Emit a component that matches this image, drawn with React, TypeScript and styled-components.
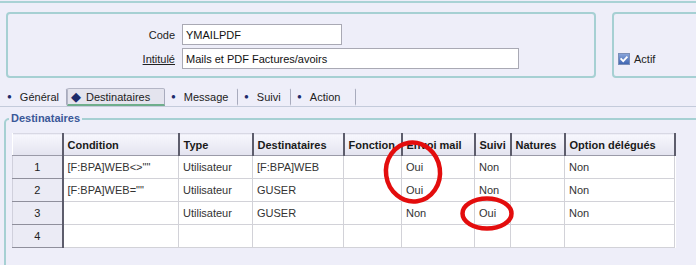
import styled, { createGlobalStyle } from 'styled-components';

const GlobalStyle = createGlobalStyle`
	html, body {
		margin: 0;
		padding: 0;
		background: #eeeef9;
		overflow: hidden;
	}
	body {
		font-family: "Liberation Sans", Arial, sans-serif;
		font-size: 11px;
		color: #222;
	}
`;

const Page = styled.div`
	width: 696px;
	height: 265px;
	overflow: hidden;
	padding-top: 1px;
	box-sizing: border-box;
`;

const TopRule = styled.div`
	height: 0;
	border-top: 2px solid #a9d2d5;
`;

const Header = styled.div`
	display: flex;
	gap: 16px;
	margin-top: 9px;
	padding-left: 6px;
	height: 66px;
`;

const Panel = styled.div<{ $w: number }>`
	flex: 0 0 auto;
	width: ${(p) => p.$w}px;
	box-sizing: border-box;
	border: 2px solid #a6d0d3;
	border-radius: 4px;
	display: flex;
`;

const Form = styled.div`
	display: grid;
	grid-template-columns: 167px auto;
	column-gap: 7px;
	row-gap: 3px;
	align-items: center;
	padding-top: 10px;
	align-content: start;
`;

const Label = styled.span<{ $u?: boolean }>`
	text-align: right;
	color: #222;
	text-decoration: ${(p) => (p.$u ? 'underline' : 'none')};
`;

const Field = styled.div<{ $w: number }>`
	width: ${(p) => p.$w}px;
	height: 21px;
	box-sizing: border-box;
	border: 1px solid #a9a9b4;
	background: #fff;
	padding-left: 3px;
	display: flex;
	align-items: center;
	color: #111;
`;

const CheckRow = styled.div`
	display: flex;
	align-items: center;
	gap: 4px;
	align-self: flex-end;
	padding: 0 0 11px 4px;
	color: #222;
`;

const Tabs = styled.div`
	display: flex;
	margin-top: 10px;
	height: 18px;
	padding-left: 1px;
	border-bottom: 1px solid #c4cbdb;
`;

const Tab = styled.div<{ $w: number; $active?: boolean }>`
	width: ${(p) => p.$w}px;
	box-sizing: border-box;
	display: flex;
	align-items: center;
	gap: ${(p) => (p.$active ? 5 : 8)}px;
	padding-left: ${(p) => (p.$active ? 3 : 5)}px;
	border-right: 1px solid #a8abbd;
	border-top: 1px solid ${(p) => (p.$active ? '#b4b6c6' : 'transparent')};
	border-left: 1px solid ${(p) => (p.$active ? '#b4b6c6' : 'transparent')};
	border-bottom: 2px solid ${(p) => (p.$active ? '#6fae8c' : 'transparent')};
	background: ${(p) => (p.$active ? '#e4e4ee' : 'transparent')};
	color: #222;
	border-radius: 2px 2px 0 0;
`;

const Bullet = styled.span<{ $active?: boolean }>`
	color: #1d2b6a;
	font-size: ${(p) => (p.$active ? 13 : 8)}px;
	line-height: 1;
`;

const Group = styled.fieldset`
	margin: 5px 0 0 4px;
	padding: 8px 0 40px 6px;
	width: 760px;
	border: 2px solid #a6d0d3;
	border-radius: 5px;
	box-sizing: border-box;

	legend {
		margin-left: -3px;
		padding: 0 2px;
		font-weight: bold;
		color: #3a5898;
		font-size: 11px;
		line-height: 13px;
	}
`;

const TableWrap = styled.div`
	position: relative;
	width: 662px;
`;

const Grid = styled.table`
	border-collapse: collapse;
	table-layout: fixed;
	width: 662px;
	background: #fff;
`;

const Col = styled.col<{ $w: number }>`
	width: ${(p) => p.$w}px;
`;

const Row = styled.tr<{ $h: number }>`
	height: ${(p) => p.$h}px;
`;

const HeadCell = styled.th`
	padding: 0 0 0 4px;
	text-align: left;
	font-weight: bold;
	color: #1a1a1a;
	background: linear-gradient(#f7f7fd, #e3e3ef);
	border-right: 2px solid #5d5d6c;
	border-bottom: 1px solid #9a9aa8;
	border-top: 1px solid #d8d8e4;
	white-space: nowrap;
	overflow: hidden;
`;

const RowHead = styled.th`
	padding: 0;
	text-align: center;
	font-weight: normal;
	color: #222;
	background: #ebebf5;
	border-right: 2px solid #5d5d6c;
	border-bottom: 1px solid #8f8f9c;
	border-left: 1px solid #d0d0dc;
`;

const Cell = styled.td`
	padding: 0 0 0 4px;
	color: #333;
	border-right: 1px solid #d2d2d8;
	border-bottom: 1px solid #d2d2d8;
	white-space: nowrap;
	overflow: hidden;
`;

const Mark = styled.svg<{ $x: number; $y: number }>`
	position: absolute;
	left: ${(p) => p.$x}px;
	top: ${(p) => p.$y}px;
	overflow: visible;
	pointer-events: none;
`;

const columns = [
	{ title: '', w: 50 },
	{ title: 'Condition', w: 116 },
	{ title: 'Type', w: 74 },
	{ title: 'Destinataires', w: 91 },
	{ title: 'Fonction', w: 58 },
	{ title: 'Envoi mail', w: 73 },
	{ title: 'Suivi', w: 36 },
	{ title: 'Natures', w: 54 },
	{ title: 'Option délégués', w: 110 },
];

const rows = [
	['[F:BPA]WEB<>""', 'Utilisateur', '[F:BPA]WEB', '', 'Oui', 'Non', '', 'Non'],
	['[F:BPA]WEB=""', 'Utilisateur', 'GUSER', '', 'Oui', 'Non', '', 'Non'],
	['', 'Utilisateur', 'GUSER', '', 'Non', 'Oui', '', 'Non'],
	['', '', '', '', '', '', '', ''],
];

const tabs = [
	{ label: 'Général', w: 66 },
	{ label: 'Destinataires', w: 98, active: true },
	{ label: 'Message', w: 73 },
	{ label: 'Suivi', w: 53 },
	{ label: 'Action', w: 65 },
];

function CheckBox() {
	return (
		<svg width="12" height="12" viewBox="0 0 12 12">
			<defs>
				<linearGradient id="cb" x1="0" y1="0" x2="0" y2="1">
					<stop offset="0" stopColor="#8aa6dc" />
					<stop offset="1" stopColor="#3e64b0" />
				</linearGradient>
			</defs>
			<rect x="0.5" y="0.5" width="11" height="11" fill="url(#cb)" stroke="#7b8fb8" />
			<path d="M2.6 5.4 L5.2 8.2 L9.4 3.6" fill="none" stroke="#fff" strokeWidth="1.8" />
		</svg>
	);
}

export default function App() {
	return (
		<Page>
			<GlobalStyle />
			<TopRule />
			<Header>
				<Panel $w={590}>
					<Form>
						<Label>Code</Label>
						<Field $w={160}>YMAILPDF</Field>
						<Label $u>Intitulé</Label>
						<Field $w={337}>Mails et PDF Factures/avoirs</Field>
					</Form>
				</Panel>
				<Panel $w={120}>
					<CheckRow>
						<CheckBox />
						<span>Actif</span>
					</CheckRow>
				</Panel>
			</Header>

			<Tabs>
				{tabs.map((t) => (
					<Tab key={t.label} $w={t.w} $active={t.active}>
						<Bullet $active={t.active}>{t.active ? '◆' : '●'}</Bullet>
						<span>{t.label}</span>
					</Tab>
				))}
			</Tabs>

			<Group>
				<legend>Destinataires</legend>
				<TableWrap>
					<Grid>
						<colgroup>
							{columns.map((c, i) => (
								<Col key={i} $w={c.w} />
							))}
						</colgroup>
						<thead>
							<Row $h={22}>
								{columns.map((c, i) => (
									<HeadCell key={i}>{c.title}</HeadCell>
								))}
							</Row>
						</thead>
						<tbody>
							{rows.map((r, i) => (
								<Row key={i} $h={23}>
									<RowHead>{i + 1}</RowHead>
									{r.map((v, j) => (
										<Cell key={j}>{v}</Cell>
									))}
								</Row>
							))}
						</tbody>
					</Grid>
					<Mark $x={371} $y={7} width="60" height="64" viewBox="0 0 60 64">
						<ellipse cx="30" cy="32" rx="27" ry="29.5" fill="none" stroke="#e30d0d" strokeWidth="4.5" transform="rotate(-8 30 32)" />
					</Mark>
					<Mark $x={448} $y={63} width="54" height="35" viewBox="0 0 54 35">
						<ellipse cx="27" cy="17.5" rx="24.5" ry="15" fill="none" stroke="#e30d0d" strokeWidth="4.5" />
					</Mark>
				</TableWrap>
			</Group>
		</Page>
	);
}
